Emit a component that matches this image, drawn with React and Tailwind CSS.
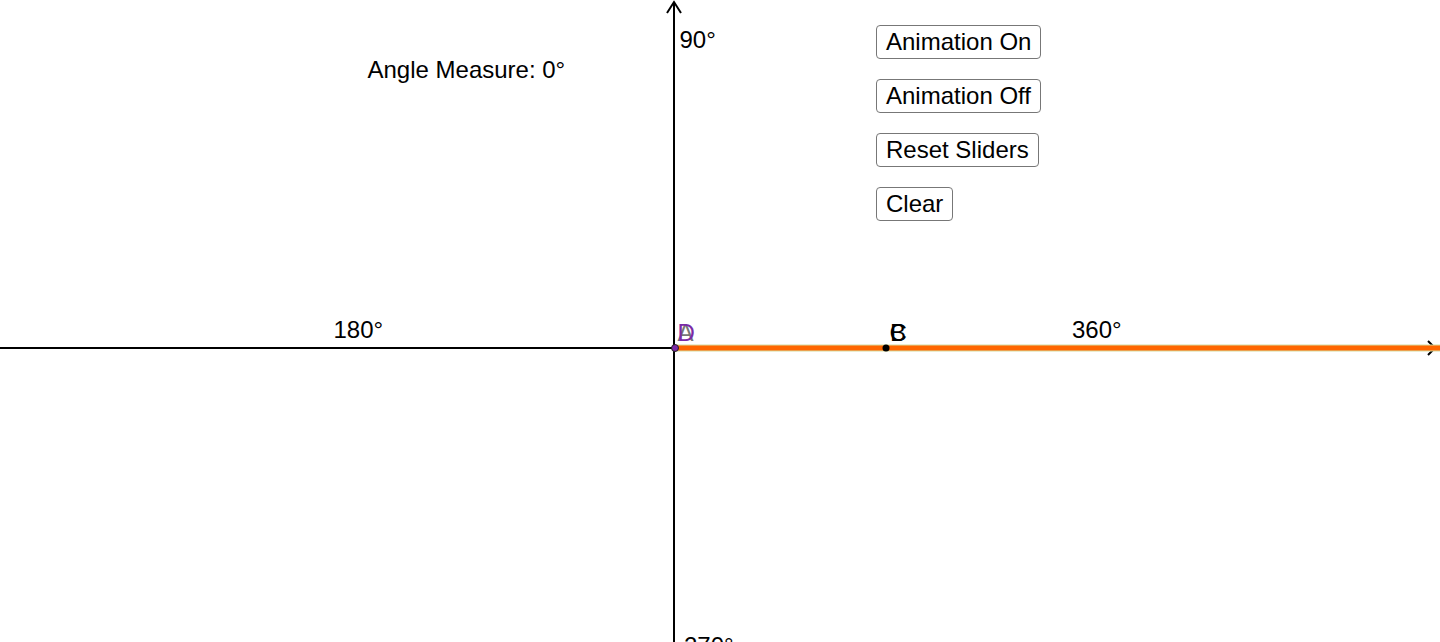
import React from 'react';

const Label = ({ x, y, color = 'text-black', children }) => (
  <div
    className={`absolute whitespace-nowrap text-[24px] leading-[24px] ${color}`}
    style={{ left: x, top: y }}
  >
    {children}
  </div>
);

const buttons = ['Animation On', 'Animation Off', 'Reset Sliders', 'Clear'];

const App = () => {
  return (
    <div
      className="relative w-[1440px] h-[642px] overflow-hidden bg-white text-black"
      style={{ fontFamily: '"Liberation Sans", Arial, sans-serif' }}
    >
      {/* axes, ray and points */}
      <svg className="absolute inset-0" width="1440" height="642" viewBox="0 0 1440 642">
        <line x1="0" y1="348" x2="1436" y2="348" stroke="#000" strokeWidth="2" />
        <line x1="674" y1="2" x2="674" y2="642" stroke="#000" strokeWidth="2" />
        <polyline points="667,13 674,2 681,13" fill="none" stroke="#000" strokeWidth="2" />
        <polyline points="1428,341 1435,348 1428,355" fill="none" stroke="#000" strokeWidth="2" />
        <line x1="675" y1="348" x2="1440" y2="348" stroke="#d6dca0" strokeWidth="7" />
        <line x1="675" y1="348" x2="1440" y2="348" stroke="#ff6600" strokeWidth="5" />
        <circle cx="886" cy="348" r="3.5" fill="#000" />
        <circle cx="675" cy="348" r="3.5" fill="#7b2aa6" stroke="#222" strokeWidth="1" />
      </svg>

      <Label x={367.5} y={57.5}>Angle Measure: 0°</Label>
      <Label x={679.5} y={28}>90°</Label>
      <Label x={333.5} y={318}>180°</Label>
      <Label x={1072} y={318}>360°</Label>
      <Label x={684} y={634}>270°</Label>
      <Label x={677.5} y={321} color="text-[#777777]">A</Label>
      <Label x={677.5} y={321} color="text-[#7b2aa6]">D</Label>
      <Label x={889.5} y={320.5}>C</Label>
      <Label x={890} y={320.5}>B</Label>

      <div className="absolute left-[876px] top-[25px] flex flex-col items-start gap-[20px]">
        {buttons.map((b) => (
          <button
            key={b}
            className="h-[34px] px-[9px] border border-[#777777] rounded-[4px] bg-white text-[24px] leading-[24px] text-black whitespace-nowrap"
          >
            {b}
          </button>
        ))}
      </div>
    </div>
  );
};

export default App;
